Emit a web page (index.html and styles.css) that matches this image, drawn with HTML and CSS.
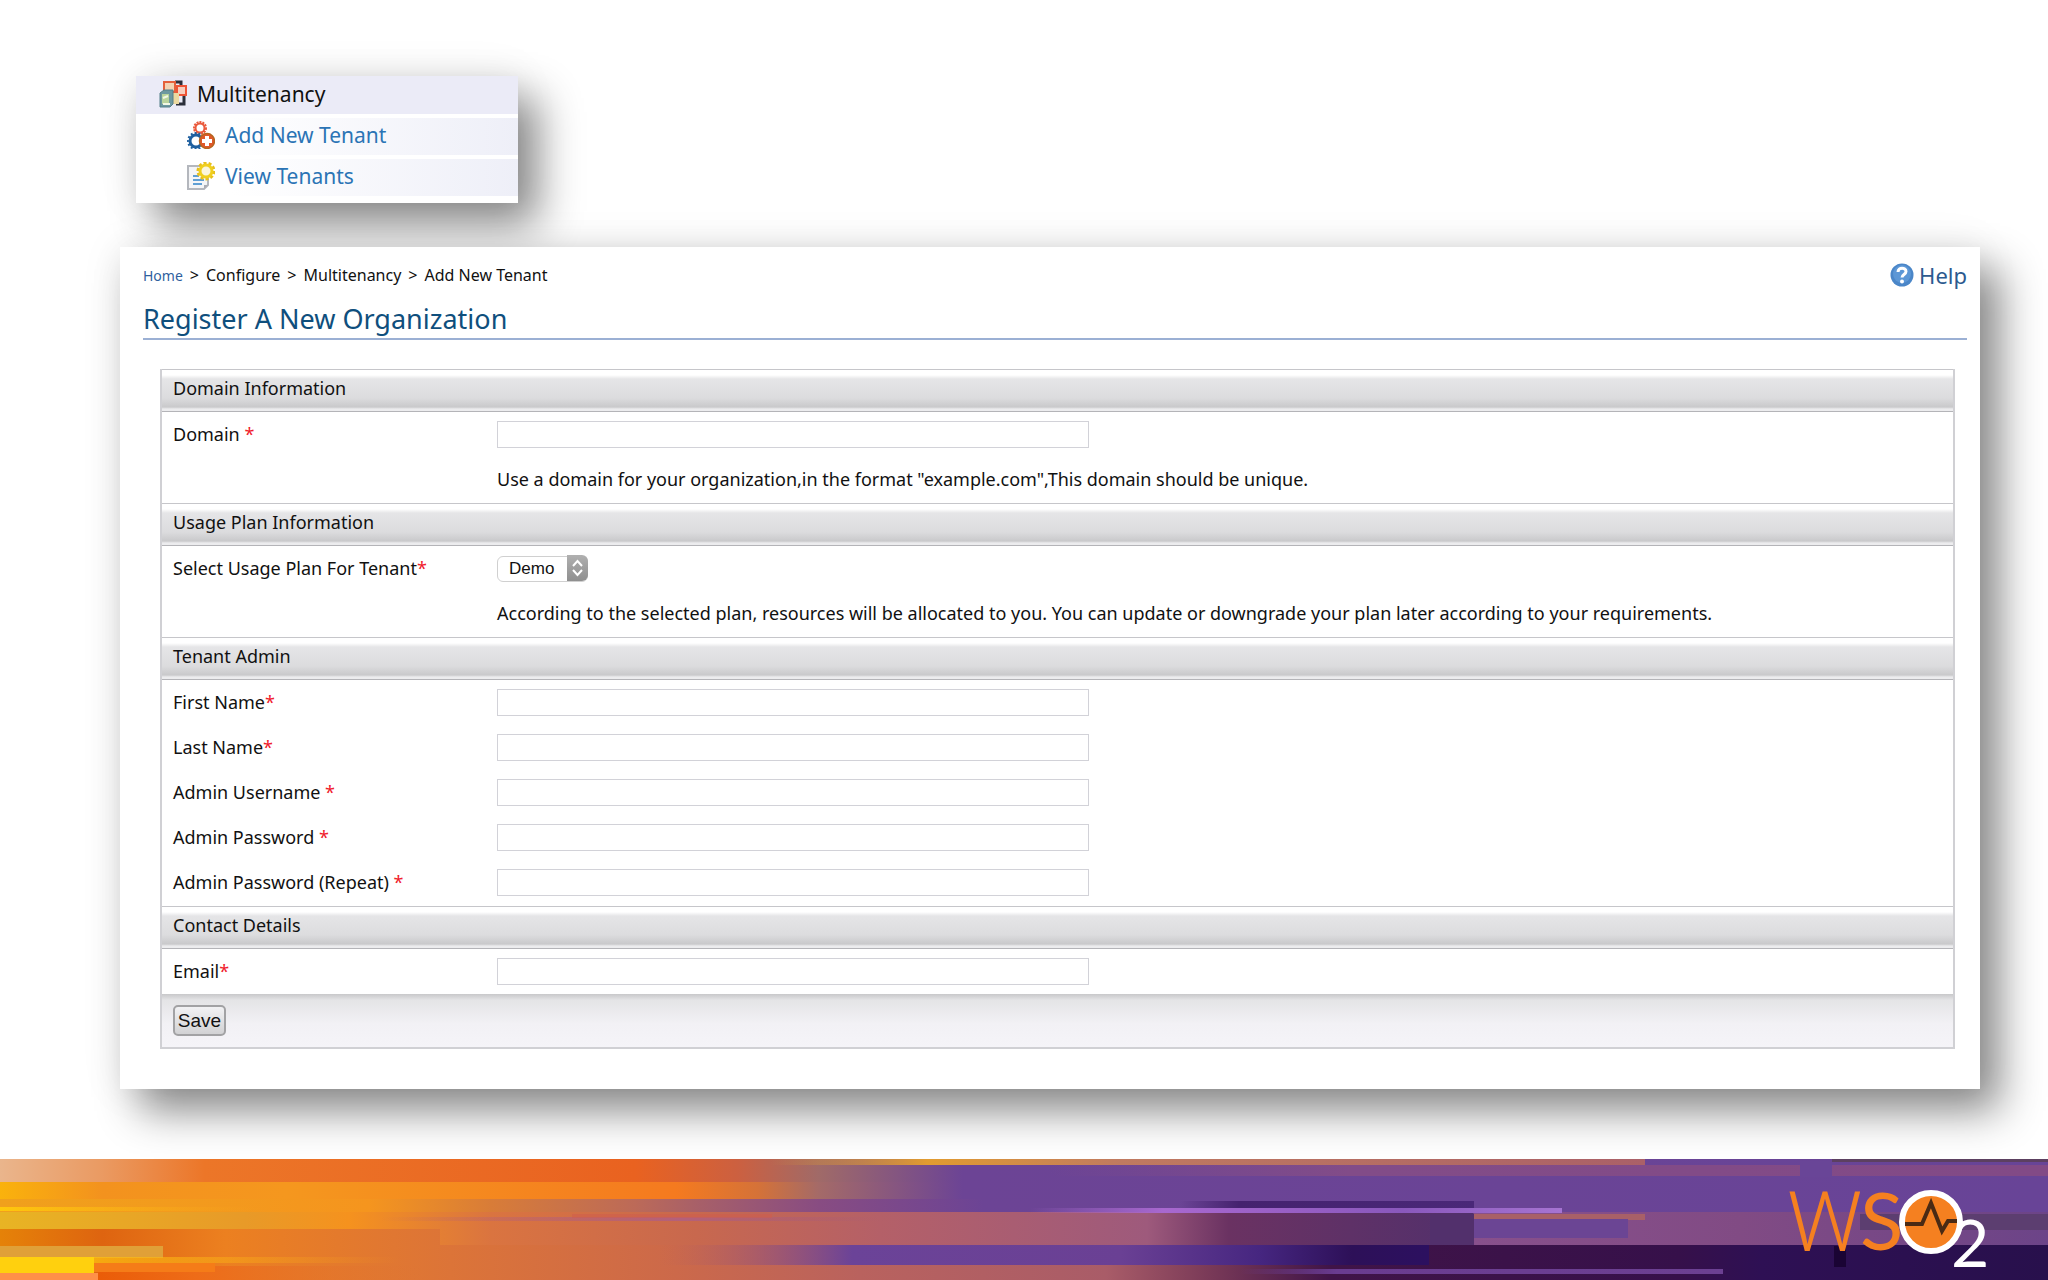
FILE: index.html
```html
<!DOCTYPE html>
<html lang="en">
<head>
<meta charset="utf-8">
<title>Register A New Organization</title>
<link rel="stylesheet" href="styles.css">
</head>
<body>
<main class="stage">
  <nav class="menu" aria-label="Multitenancy">
    <h2 class="menu-title">
      <svg class="icon" viewBox="0 0 28 28" aria-hidden="true">
        <path d="M16 2h6v6M25 16v8h-8" fill="none" stroke="#2b2f3a" stroke-width="3"/>
        <rect x="5" y="2" width="11" height="10" fill="#f3d3b4" stroke="#e4603c" stroke-width="2"/>
        <rect x="18" y="6" width="9" height="9" fill="#f7cdbd" stroke="#ee5436" stroke-width="2"/>
        <rect x="13" y="13" width="7" height="11" fill="#ecd9a0"/>
        <path d="M1 13l4-3h9v14l-3 3H1z" fill="#6d98a0" stroke="#557f88"/>
        <path d="M3 14h7v10H3z" fill="#b9d39c"/>
        <path d="M4 18l5-2M4 24h7" stroke="#f2f7e4" stroke-width="2"/>
      </svg>
      <span>Multitenancy</span>
    </h2>
    <ul class="menu-list">
      <li><a class="menu-link" href="#add">
        <svg class="icon" viewBox="0 0 28 28" aria-hidden="true">
          <circle cx="13" cy="7" r="6" fill="none" stroke="#ea5a3c" stroke-width="2" stroke-dasharray="2 1"/>
          <circle cx="13" cy="7" r="4.500" fill="#fff" stroke="#ea5a3c" stroke-width="2"/>
          <circle cx="9" cy="20" r="8" fill="none" stroke="#1e5f9f" stroke-width="2" stroke-dasharray="2 2"/>
          <circle cx="9" cy="20" r="6" fill="#fff" stroke="#1e5f9f" stroke-width="3"/>
          <circle cx="20" cy="20" r="7.500" fill="#e0582a" stroke="#b5651f" stroke-width="1.500"/>
          <path d="M20 15v10M15 20h10" stroke="#fff" stroke-width="4"/>
        </svg>
        <span>Add New Tenant</span></a></li>
      <li><a class="menu-link" href="#view">
        <svg class="icon" viewBox="0 0 28 28" aria-hidden="true">
          <path d="M1 4h20v19l-4 4H1z" fill="#f4f5f7" stroke="#b4b7bd" stroke-width="2"/>
          <path d="M17 27v-4h4z" fill="#a9acb3"/>
          <path d="M6 14h6M6 18h11M6 22h9" stroke="#5f9fd4" stroke-width="2"/>
          <circle cx="19" cy="9" r="8" fill="none" stroke="#e6bf1c" stroke-width="3" stroke-dasharray="3 2"/>
          <circle cx="19" cy="9" r="6" fill="#fbf6dc" stroke="#f0cf1e" stroke-width="3"/>
        </svg>
        <span>View Tenants</span></a></li>
    </ul>
  </nav>

  <section class="panel">
    <div class="topline">
      <nav class="crumbs" aria-label="Breadcrumb"><a href="#home">Home</a> <span>&gt;</span> <span>Configure</span> <span>&gt;</span> <span>Multitenancy</span> <span>&gt;</span> <span>Add New Tenant</span></nav>
      <a class="help" href="#help">
        <svg class="help-icon" viewBox="0 0 24 24" aria-hidden="true">
          <circle cx="12" cy="12" r="11.500" fill="#4a86c8"/>
          <circle cx="12" cy="11" r="9" fill="#5c97d6"/>
          <path d="M8 9c0-5 8-5 8-.5 0 3-4 3-4 6" fill="none" stroke="#fff" stroke-width="3"/>
          <circle cx="12" cy="18.500" r="2" fill="#fff"/>
        </svg>
        <span>Help</span></a>
    </div>
    <h1 class="title">Register A New Organization</h1>

    <form class="form">
      <h2 class="section">Domain Information</h2>
      <div class="row"><label for="domain">Domain <b>*</b></label><input class="text" id="domain" type="text"></div>
      <p class="row hint">Use a domain for your organization,in the format "example.com",This domain should be unique.</p>

      <h2 class="section">Usage Plan Information</h2>
      <div class="row"><label for="plan">Select Usage Plan For Tenant<b>*</b></label>
        <div class="picker">
          <select id="plan"><option>Demo</option></select>
          <svg class="picker-arrow" viewBox="0 0 21 26" aria-hidden="true"><path d="M6 11l4.500-5 4.500 5M6 15l4.500 5 4.500-5" fill="none" stroke="#fff" stroke-width="2"/></svg>
        </div>
      </div>
      <p class="row hint">According to the selected plan, resources will be allocated to you. You can update or downgrade your plan later according to your requirements.</p>

      <h2 class="section">Tenant Admin</h2>
      <div class="row"><label for="first">First Name<b>*</b></label><input class="text" id="first" type="text"></div>
      <div class="row"><label for="last">Last Name<b>*</b></label><input class="text" id="last" type="text"></div>
      <div class="row"><label for="user">Admin Username <b>*</b></label><input class="text" id="user" type="text"></div>
      <div class="row"><label for="pass">Admin Password <b>*</b></label><input class="text" id="pass" type="password"></div>
      <div class="row"><label for="pass2">Admin Password (Repeat) <b>*</b></label><input class="text" id="pass2" type="password"></div>

      <h2 class="section">Contact Details</h2>
      <div class="row"><label for="email">Email<b>*</b></label><input class="text" id="email" type="email"></div>

      <div class="actions"><button class="save" type="button">Save</button></div>
    </form>
  </section>
</main>

<footer class="band">
  <svg class="stripes" viewBox="0 0 2048 121" preserveAspectRatio="none" aria-hidden="true">
    <defs>
      <linearGradient id="a" gradientUnits="userSpaceOnUse" x1="0" x2="2048"><stop offset="0" stop-color="#eab58c"/><stop offset=".05" stop-color="#ea9a62"/><stop offset=".1" stop-color="#ec7628"/><stop offset=".31" stop-color="#e96220"/><stop offset=".36" stop-color="#cc6040"/><stop offset=".4" stop-color="#a06a68"/><stop offset=".47" stop-color="#6c4495"/><stop offset="1" stop-color="#684497"/></linearGradient>
      <linearGradient id="b" gradientUnits="userSpaceOnUse" x1="0" x2="2048"><stop offset="0" stop-color="#fab20c"/><stop offset=".05" stop-color="#f3921e"/><stop offset=".14" stop-color="#f5971e"/><stop offset=".33" stop-color="#f57a1f"/><stop offset=".37" stop-color="#d57238"/><stop offset=".4" stop-color="#a46a68"/><stop offset=".47" stop-color="#6c4495"/><stop offset="1" stop-color="#684497"/></linearGradient>
      <linearGradient id="c" gradientUnits="userSpaceOnUse" x1="0" x2="2048"><stop offset="0" stop-color="#f0a01c"/><stop offset=".18" stop-color="#f5951e"/><stop offset=".24" stop-color="#d87c38"/><stop offset=".31" stop-color="#bc6a58"/><stop offset=".34" stop-color="#a86068"/><stop offset=".4" stop-color="#884c82"/><stop offset=".48" stop-color="#6c4495"/><stop offset="1" stop-color="#684497"/></linearGradient>
      <linearGradient id="d" gradientUnits="userSpaceOnUse" x1="0" x2="2048"><stop offset="0" stop-color="#e8b424"/><stop offset=".12" stop-color="#e89a28"/><stop offset=".17" stop-color="#f5921e"/><stop offset=".24" stop-color="#da7440"/><stop offset=".34" stop-color="#c8684e"/><stop offset=".43" stop-color="#b46068"/><stop offset=".56" stop-color="#9e5a7c"/><stop offset=".6" stop-color="#6a3262"/><stop offset=".719" stop-color="#52306c"/><stop offset=".72" stop-color="#88508c"/><stop offset=".85" stop-color="#814b84"/><stop offset="1" stop-color="#6c4488"/></linearGradient>
      <linearGradient id="e" gradientUnits="userSpaceOnUse" x1="0" x2="2048"><stop offset="0" stop-color="#e58208"/><stop offset=".05" stop-color="#de6410"/><stop offset=".11" stop-color="#ec8020"/><stop offset=".22" stop-color="#dc7438"/><stop offset=".33" stop-color="#cc694a"/><stop offset=".42" stop-color="#b9625e"/><stop offset=".54" stop-color="#a95c68"/><stop offset=".59" stop-color="#7a3a58"/><stop offset=".65" stop-color="#401448"/><stop offset=".82" stop-color="#36104a"/><stop offset=".86" stop-color="#2e1054"/><stop offset="1" stop-color="#28104c"/></linearGradient>
      <linearGradient id="f"><stop offset="0" stop-color="#b86060" stop-opacity="0"/><stop offset=".25" stop-color="#6b4398"/><stop offset=".6" stop-color="#6a4094"/><stop offset=".78" stop-color="#462680"/><stop offset=".9" stop-color="#2d1058"/><stop offset="1" stop-color="#2c1060"/></linearGradient>
      <linearGradient id="g"><stop offset="0" stop-color="#e09a30" stop-opacity="0"/><stop offset=".18" stop-color="#e29c30"/><stop offset=".4" stop-color="#c07a60"/><stop offset="1" stop-color="#aa6068"/></linearGradient>
      <linearGradient id="h"><stop offset="0" stop-color="#a86ad0" stop-opacity="0"/><stop offset=".25" stop-color="#a868cf"/><stop offset=".7" stop-color="#8a58bc"/><stop offset="1" stop-color="#a674d2"/></linearGradient>
      <linearGradient id="i"><stop offset="0" stop-color="#ffc80c"/><stop offset="1" stop-color="#f8a41c" stop-opacity="0"/></linearGradient>
      <linearGradient id="j"><stop offset="0" stop-color="#824c88" stop-opacity="0"/><stop offset=".3" stop-color="#824c88"/><stop offset="1" stop-color="#824a86"/></linearGradient>
      <linearGradient id="k"><stop offset="0" stop-color="#ea5c08"/><stop offset=".3" stop-color="#ee6c18"/><stop offset="1" stop-color="#dc7438" stop-opacity="0"/></linearGradient>
      <linearGradient id="l"><stop offset="0" stop-color="#45226f" stop-opacity="0"/><stop offset=".2" stop-color="#45226f"/><stop offset="1" stop-color="#4a2878"/></linearGradient>
      <linearGradient id="m"><stop offset="0" stop-color="#6a3c90" stop-opacity="0"/><stop offset=".2" stop-color="#6a3c90"/><stop offset="1" stop-color="#6c4092"/></linearGradient>
      <linearGradient id="n"><stop offset="0" stop-color="#b86070" stop-opacity="0"/><stop offset=".6" stop-color="#b4607a"/><stop offset="1" stop-color="#a0587c" stop-opacity="0"/></linearGradient>
    </defs>
    <rect width="2048" height="23" fill="url(#a)"/>
    <rect y="23" width="2048" height="17" fill="url(#b)"/>
    <rect y="40" width="2048" height="15" fill="url(#c)"/>
    <rect y="53" width="2048" height="33" fill="url(#d)"/>
    <rect x="0" y="48" width="260" height="4" fill="url(#i)"/>
    <rect x="380" y="58" width="500" height="4" fill="url(#n)"/>
    <rect x="572" y="55" width="200" height="4" fill="#d05c4c" opacity=".5"/>
    <rect y="70" width="440" height="16" fill="url(#e)"/>
    <rect y="86" width="2048" height="35" fill="url(#e)"/>
    <rect y="87" width="163" height="12" fill="#e0a038"/>
    <rect y="98" width="400" height="6" fill="url(#i)"/>
    <rect x="98" y="107" width="330" height="14" fill="url(#k)"/>
    <rect x="92" y="104" width="123" height="9" fill="#f57c18"/>
    <rect y="98" width="94" height="16" fill="#ffd00e"/>
    <rect y="114" width="98" height="7" fill="#ff9048"/>
    <rect x="660" y="86" width="769" height="20" fill="url(#f)"/>
    <rect x="770" y="0" width="875" height="6" fill="url(#g)"/>
    <rect x="1050" y="6" width="998" height="11" fill="url(#j)"/>
    <rect x="1800" y="2" width="32" height="16" fill="#694597"/>
    <rect x="1832" y="0" width="216" height="3" fill="#5c4060"/>
    <rect x="1180" y="42" width="294" height="8" fill="url(#l)"/>
    <rect x="1030" y="49" width="532" height="5" fill="url(#h)"/>
    <rect x="1430" y="55" width="215" height="6" fill="#a86068"/>
    <rect x="1430" y="60" width="198" height="19" fill="#6b4594"/>
    <rect x="1430" y="55" width="44" height="31" fill="#52306c"/>
    <rect x="1860" y="55" width="188" height="16" fill="#5c3e70"/>
    <rect x="1834" y="87" width="12" height="21" fill="#1a0434"/>
    <rect x="1240" y="110" width="483" height="5" fill="url(#m)"/>
  </svg>
  <svg class="logo" viewBox="0 0 220 110" role="img" aria-label="WSO2">
    <text class="logo-w" x="7" y="81">W</text>
    <text class="logo-s" x="80" y="80">S</text>
    <text class="logo-two" x="171" y="97">2</text>
    <circle cx="151" cy="52" r="29" fill="#f58020" stroke="#fff" stroke-width="6"/>
    <path d="M125 54h17l9-21 11 28 6-10h9" fill="none" stroke="#4a2a14" stroke-width="4"/>
  </svg>
</footer>
</body>
</html>
```
FILE: styles.css
```css
* { box-sizing: border-box; }

body {
  margin: 0;
  min-height: 100vh;
  display: flex;
  flex-direction: column;
  background: #fff;
  color: #111;
  font-family: "Noto Sans", "Open Sans", sans-serif;
  font-size: 18px;
  line-height: 24px;
}

h1, h2, p, ul { margin: 0; padding: 0; font-weight: 400; }
a { text-decoration: none; }

.stage {
  flex: 1;
  display: flex;
  flex-direction: column;
  align-items: flex-start;
  gap: 44px;
  padding: 76px 68px 70px 120px;
}

.menu, .panel {
  box-shadow: 20px 22px 40px rgba(0, 0, 0, .45), 0 0 40px rgba(0, 0, 0, .08);
}

.menu {
  width: 382px;
  margin-left: 16px;
  background: #fff;
  font-size: 21px;
}
.menu-title {
  display: flex;
  align-items: center;
  gap: 10px;
  height: 38px;
  padding: 0 0 2px 23px;
  background: #ebebf7;
  font-size: 21px;
}
.menu-list {
  padding-bottom: 3px;
  list-style: none;
}
.menu-list li {
  padding-top: 4px;
}
.menu-list li:last-child {
  padding-bottom: 4px;
}
.menu-link {
  display: flex;
  align-items: center;
  gap: 10px;
  height: 37px;
  padding: 0 0 3px 51px;
  background: linear-gradient(90deg, #fff 25%, #eeeff8);
  color: #2b74b5;
}
.icon { width: 28px; height: 28px; }

.panel {
  align-self: stretch;
  padding: 15px 13px 40px 23px;
  background: #fff;
}
.topline {
  display: flex;
  justify-content: space-between;
  align-items: center;
  height: 26px;
}
.crumbs {
  display: flex;
  align-items: baseline;
  gap: 7px;
  font-size: 16px;
}
.crumbs a { color: #2f5f9e; font-size: 14px; }
.help {
  display: flex;
  align-items: center;
  gap: 5px;
  color: #2c5a8f;
  font-size: 22px;
}
.help-icon { width: 24px; height: 24px; }
.title {
  padding: 14px 0 2px;
  border-bottom: 2px solid #9bb0d4;
  color: #0f4f7d;
  font-size: 27px;
  line-height: 34px;
}

.form {
  margin: 29px 12px 0 17px;
  border: 1px solid #d0d0d4;
  border-width: 0 2px 2px;
}
.section {
  height: 43px;
  padding: 6px 11px;
  border: solid #c6c6ca;
  border-width: 1px 0;
  border-bottom-color: #b4b4b8;
  background: linear-gradient(#fff 0, #fff 5px, #e5e5e7 9px, #dcdcde 28px, #c9c9cb 37px, #ececee 39px);
  font-size: 18px;
}
.row + .section { margin-top: 1px; }
.row {
  display: grid;
  grid-template-columns: 324px 592px;
  align-items: center;
  height: 45px;
  padding: 0 0 1px 11px;
}
.row b { color: #f0202c; font-weight: 400; }
.hint { display: block; padding: 10px 11px 11px 335px; }
.text {
  height: 27px;
  padding: 0 6px;
  border: 1px solid #d2d2d8;
  border-radius: 0;
  background: #fff;
  font: inherit;
}
.picker { position: relative; width: 91px; height: 26px; }
.picker select {
  width: 100%;
  height: 26px;
  padding: 0 11px;
  appearance: none;
  border: 1px solid #d0d0d0;
  border-radius: 6px;
  background: #fff;
  color: #111;
  font: 17px "Liberation Sans", sans-serif;
}
.picker-arrow {
  position: absolute;
  top: 0;
  right: 0;
  width: 21px;
  height: 26px;
  border-radius: 0 6px 6px 0;
  background: linear-gradient(#b0b0b0, #8f8f8f);
  pointer-events: none;
}
.actions {
  display: flex;
  padding: 11px;
  background: linear-gradient(#c8c8ca 0, #e4e4e6 6px, #f2f1f5 30px, #f5f4f8);
}
.save {
  width: 53px;
  height: 31px;
  padding: 0;
  border: 2px solid #a2a2a4;
  border-radius: 5px;
  background: linear-gradient(#f2f2f4, #d2d2d4);
  color: #111;
  font: 19px "Liberation Sans", sans-serif;
}

.band {
  position: relative;
  display: flex;
  justify-content: flex-end;
  height: 121px;
  padding: 11px 48px 0 0;
}
.stripes {
  position: absolute;
  inset: 0;
  width: 100%;
  height: 100%;
}
.logo { position: relative; width: 220px; height: 110px; }
.logo-w { fill: #f58020; font: 300 84px Roboto, sans-serif; }
.logo-s { fill: #f58020; font: 400 80px Lato, sans-serif; }
.logo-two { fill: #fff; font: 400 66px Lato, sans-serif; }
```
